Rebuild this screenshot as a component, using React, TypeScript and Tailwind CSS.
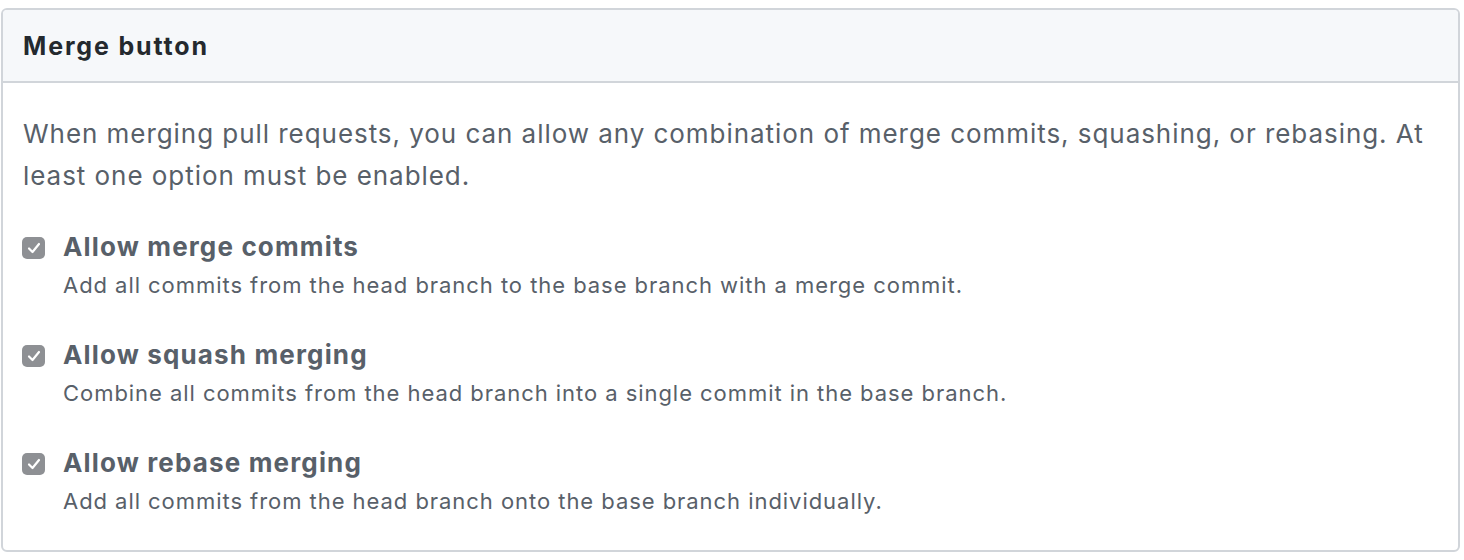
import React from "react";

const items = [
  {
    title: "Allow merge commits",
    desc: "Add all commits from the head branch to the base branch with a merge commit.",
  },
  {
    title: "Allow squash merging",
    desc: "Combine all commits from the head branch into a single commit in the base branch.",
  },
  {
    title: "Allow rebase merging",
    desc: "Add all commits from the head branch onto the base branch individually.",
  },
];

function Check() {
  return (
    <div className="w-[23px] h-[22px] rounded-[5px] bg-[#8e9094] flex items-center justify-center shrink-0">
      <svg width="14" height="12" viewBox="0 0 14 12" fill="none">
        <path d="M2 6.5 L5.5 10 L12 2" stroke="white" strokeWidth="2.2" strokeLinecap="round" strokeLinejoin="round" />
      </svg>
    </div>
  );
}

export default function App() {
  return (
    <div className="bg-white w-[1464px] h-[560px] pt-[8px] pl-[1px]" style={{ fontFamily: "Inter, 'Noto Sans', sans-serif" }}>
      <div className="w-[1459px] border-2 border-[#d1d5da] rounded-[6px] overflow-hidden">
        <div className="h-[73px] bg-[#f6f8fa] border-b-2 border-[#d1d5da] flex items-center px-[20px] pt-[2px]">
          <h3 className="text-[25px] font-bold text-[#24292e] tracking-[1.85px]">Merge button</h3>
        </div>
        <div className="pl-[20px] pr-[10px] pt-[30px] pb-[30px]">
          <p className="text-[26px] leading-[42px] text-[#586069] tracking-[0.95px]">
            When merging pull requests, you can allow any combination of merge commits, squashing, or rebasing. At least one option must be enabled.
          </p>
          <div className="mt-[31px] flex flex-col gap-[32px]">
            {items.map((it) => (
              <div key={it.title} className="flex">
                <div className="w-[40px] pt-[9px] -ml-[1px] mr-[1px]">
                  <Check />
                </div>
                <div>
                  <div className="text-[26px] leading-[38px] font-bold text-[#586069] tracking-[1.15px]">{it.title}</div>
                  <div className="text-[22px] leading-[38px] text-[#586069] tracking-[0.95px]">{it.desc}</div>
                </div>
              </div>
            ))}
          </div>
        </div>
      </div>
    </div>
  );
}
